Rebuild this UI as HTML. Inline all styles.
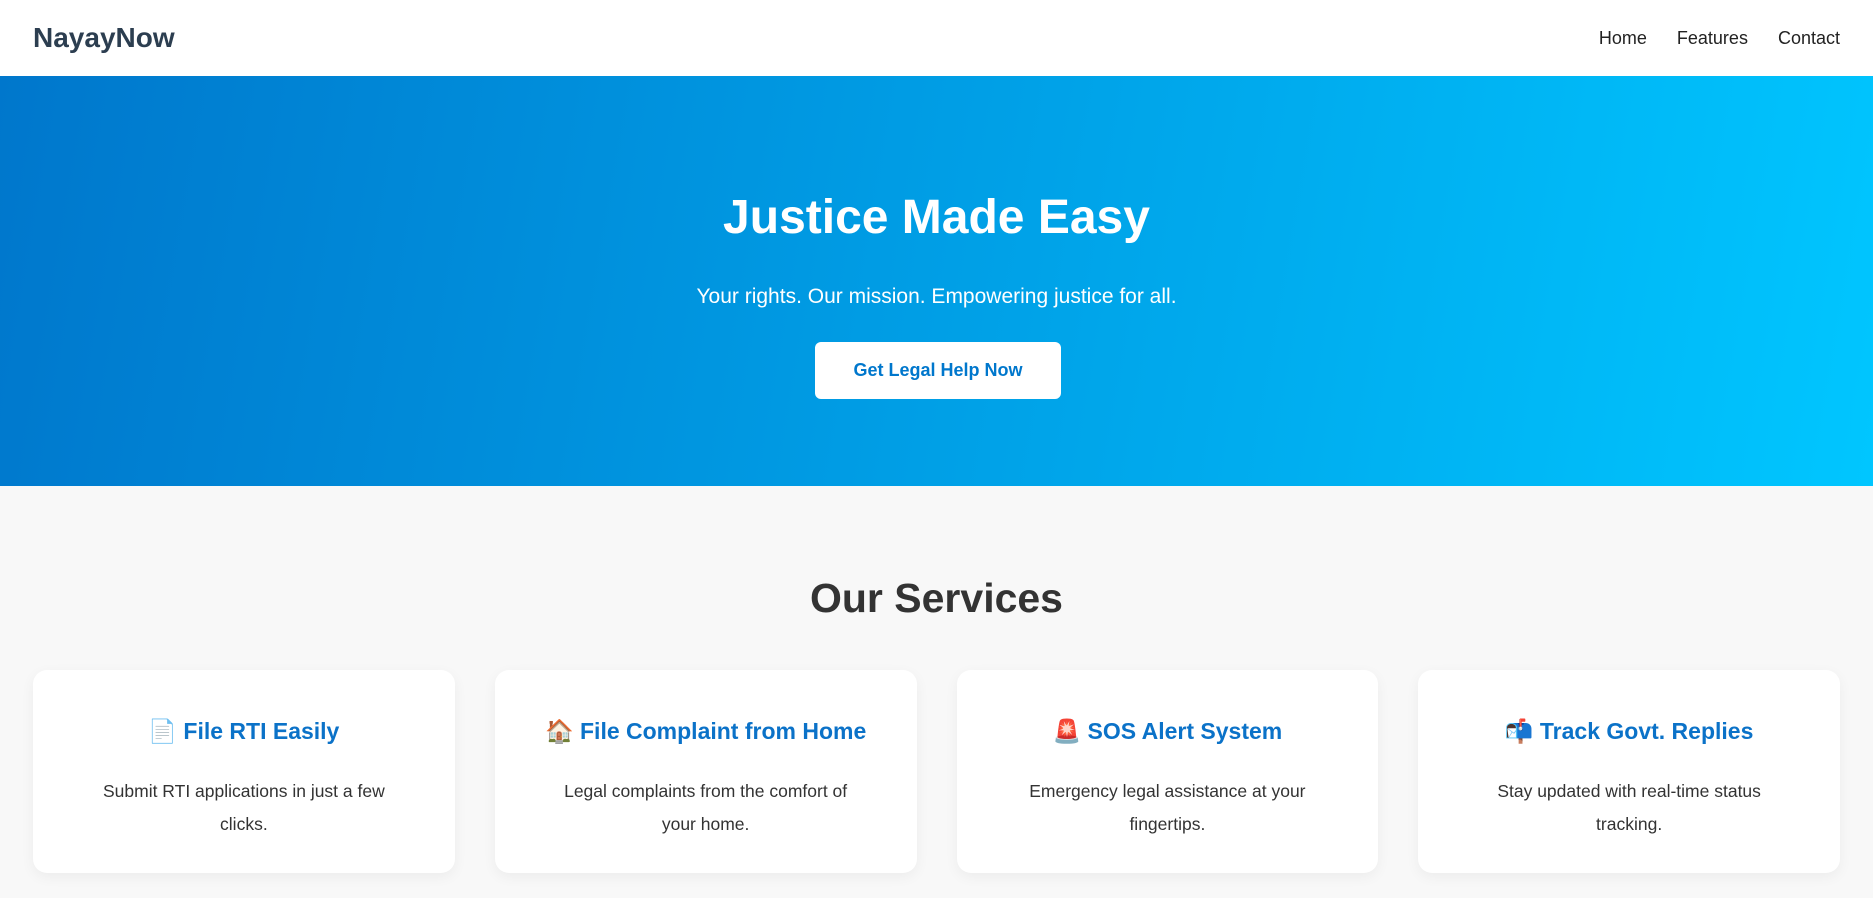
<!DOCTYPE html>
<html><head><meta charset="utf-8"><style>
*{margin:0;padding:0;box-sizing:border-box}
body{width:1873px;height:898px;overflow:hidden;font-family:"Liberation Sans","DejaVu Sans",sans-serif;background:#f8f8f8;color:#333}
nav{height:76px;background:#fff;display:flex;align-items:center;justify-content:space-between;padding:0 33px}
.logo{font-size:28px;font-weight:bold;color:#2c3e50}
.links a{font-size:18px;color:#222;margin-left:30px;text-decoration:none}
.hero{height:410px;background:linear-gradient(100deg,#0077cc,#00c6ff);text-align:center;color:#fff;position:relative}
.hero h1{position:absolute;top:114px;left:0;right:0;font-size:48px;font-weight:bold}
.hero p{position:absolute;top:209px;left:0;right:0;font-size:21px}
.btn{position:absolute;top:266px;left:815px;width:246px;height:57px;background:#fff;border-radius:6px;color:#0077cc;font-weight:bold;font-size:18px;line-height:57px}
h2{text-align:center;font-size:41px;font-weight:bold;color:#333;margin-top:89px;height:70px}
.cards{display:flex;gap:40px;padding:0 33px;margin-top:25px}
.card{width:423px;height:203px;background:#fff;border-radius:14px;box-shadow:0 4px 14px rgba(0,0,0,.05);text-align:center;padding-top:48px}
.card h3{font-size:23px;color:#0b72c8;font-weight:bold;height:40px}
.card p{font-size:17.5px;line-height:33px;margin-top:17px;padding:0 55px;color:#333}
</style></head><body>
<nav><div class="logo">NayayNow</div><div class="links"><a>Home</a><a>Features</a><a>Contact</a></div></nav>
<div class="hero"><h1>Justice Made Easy</h1><p>Your rights. Our mission. Empowering justice for all.</p><div class="btn">Get Legal Help Now</div></div>
<h2>Our Services</h2>
<div class="cards">
<div class="card"><h3>📄 File RTI Easily</h3><p>Submit RTI applications in just a few clicks.</p></div>
<div class="card"><h3>🏠 File Complaint from Home</h3><p>Legal complaints from the comfort of your home.</p></div>
<div class="card"><h3>🚨 SOS Alert System</h3><p>Emergency legal assistance at your fingertips.</p></div>
<div class="card"><h3>📬 Track Govt. Replies</h3><p>Stay updated with real-time status tracking.</p></div>
</div>
</body></html>
